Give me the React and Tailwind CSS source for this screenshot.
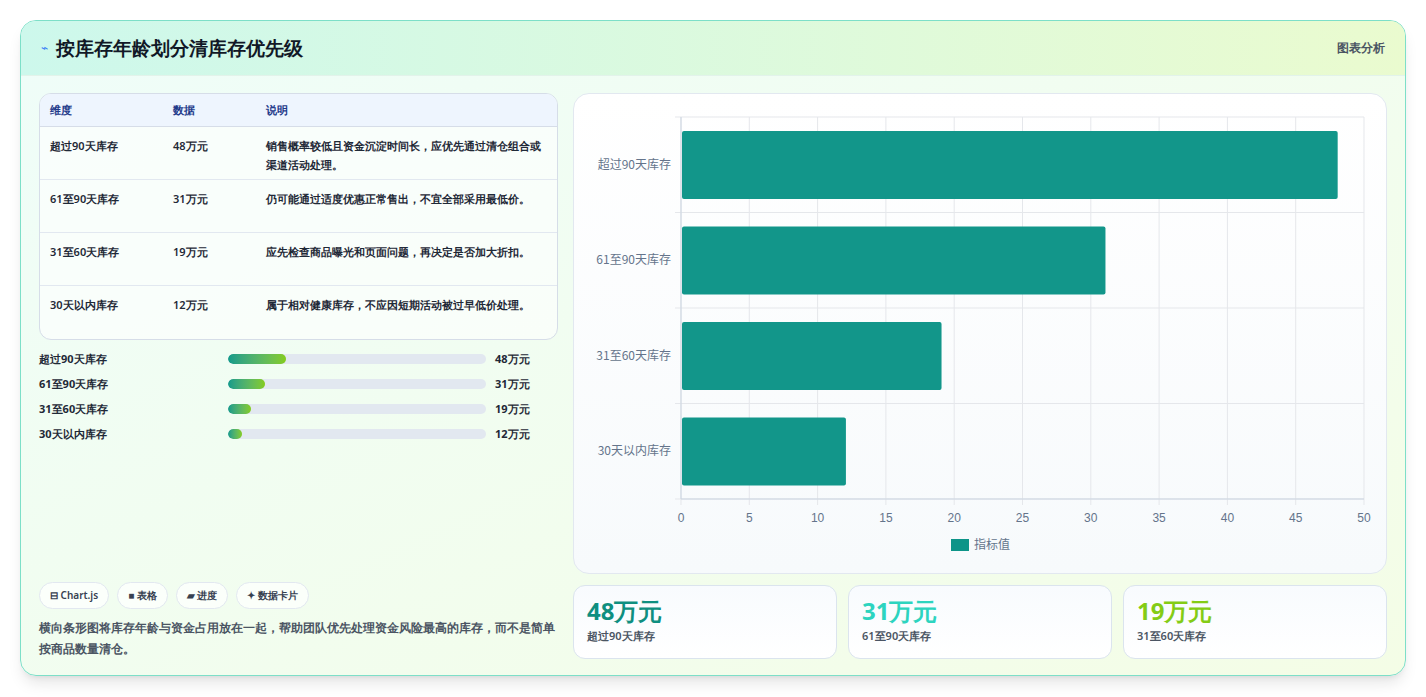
import React from 'react';

const rows = [
	{ name: '超过90天库存', value: 48, desc: '销售概率较低且资金沉淀时间长，应优先通过清仓组合或渠道活动处理。', bar: '22.5%' },
	{ name: '61至90天库存', value: 31, desc: '仍可能通过适度优惠正常售出，不宜全部采用最低价。', bar: '14.5%' },
	{ name: '31至60天库存', value: 19, desc: '应先检查商品曝光和页面问题，再决定是否加大折扣。', bar: '9%' },
	{ name: '30天以内库存', value: 12, desc: '属于相对健康库存，不应因短期活动被过早低价处理。', bar: '5.6%' },
];

function Chart() {
	const L = 107, T = 23, R = 790, B = 405;
	const w = R - L, band = (B - T) / 4;
	const ticks = [0, 5, 10, 15, 20, 25, 30, 35, 40, 45, 50];
	return (
		<svg width="813" height="480" viewBox="0 0 813 480" className="block">
			{ticks.map(t => {
				const x = L + (w * t) / 50;
				return (
					<g key={t}>
						<line x1={x} y1={T} x2={x} y2={B + 6} stroke="#e5e7eb" />
						<text x={x} y={428} textAnchor="middle" fontSize="12" fill="#64748b" fontFamily="Liberation Sans, sans-serif">{t}</text>
					</g>
				);
			})}
			{[0, 1, 2, 3, 4].map(i => (
				<line key={i} x1={L - 6} y1={T + band * i} x2={R} y2={T + band * i} stroke="#e5e7eb" />
			))}
			<line x1={L} y1={T} x2={L} y2={B} stroke="#cbd5e1" />
			<line x1={L} y1={B} x2={R} y2={B} stroke="#cbd5e1" />
			{rows.map((r, i) => (
				<g key={r.name}>
					<rect x={L + 1} y={T + band * i + 14} width={(w * r.value) / 50} height={68} rx="2" fill="#0d9488" fillOpacity="0.98" />
					<text x={L - 10} y={T + band * i + band / 2 + 4} textAnchor="end" fontSize="12" fill="#64748b" fontFamily="Noto Sans CJK SC, sans-serif">{r.name}</text>
				</g>
			))}
			<rect x={377} y={445} width={18} height={12} fill="#0d9488" />
			<text x={400} y={455} fontSize="12" fill="#64748b" fontFamily="Noto Sans CJK SC, sans-serif">指标值</text>
		</svg>
	);
}

export default function App() {
	return (
		<div className="w-[1426px] h-[697px] bg-white p-[20px] font-['Noto_Sans','Noto_Sans_CJK_SC',sans-serif]">
			<div className="w-[1386px] h-[656px] rounded-2xl border border-[#7ddfc8] bg-gradient-to-br from-[#effdf9] to-[#f4fde6] shadow-lg overflow-hidden flex flex-col">
				<div className="h-[55px] shrink-0 flex items-center justify-between px-5 bg-gradient-to-r from-[#cdf8ec] to-[#eafbcf] border-b border-[#e2f3ea]">
					<div className="flex items-center gap-2">
						<span className="text-[#3b82f6] text-xs">⌁</span>
						<span className="text-[19px] font-bold text-[#111827]">按库存年龄划分清库存优先级</span>
					</div>
					<span className="text-[12px] font-semibold text-[#4b5563]">图表分析</span>
				</div>
				<div className="flex-1 flex gap-[15px] px-[18px] pt-[17px] pb-[18px]">
					<div className="w-[520px] flex flex-col">
						<div className="rounded-xl border border-[#d6dde8] bg-white/60 overflow-hidden text-[11px] font-semibold">
							<div className="h-[33px] flex items-center bg-[#eef5fe] text-[#1e3a8a] border-b border-[#d6dde8]">
								<div className="w-[133px] pl-[10px]">维度</div>
								<div className="w-[93px]">数据</div>
								<div>说明</div>
							</div>
							{rows.map((r, i) => (
								<div key={r.name} className={`h-[53px] flex items-start pt-[9px] text-[#1f2937] leading-[19px] ${i < 3 ? 'border-b border-[#e2e8f0]' : ''}`}>
									<div className="w-[133px] pl-[10px]">{r.name}</div>
									<div className="w-[93px]">{r.value}万元</div>
									<div className="w-[282px]">{r.desc}</div>
								</div>
							))}
						</div>
						<div className="flex flex-col gap-[9px] mt-[11px] text-[11px] font-bold text-[#1f2937]">
							{rows.map(r => (
								<div key={r.name} className="flex items-center h-[16px]">
									<div className="w-[189px]">{r.name}</div>
									<div className="w-[258px] h-[10px] rounded-full bg-[#e2e8f0] overflow-hidden">
										<div className="h-full rounded-full bg-gradient-to-r from-[#0f9b8a] to-[#84cc16]" style={{ width: r.bar }}></div>
									</div>
									<div className="ml-[9px]">{r.value}万元</div>
								</div>
							))}
						</div>
						<div className="mt-auto">
							<div className="flex gap-2 text-[10px] font-semibold text-[#374151]">
								<span className="px-[10px] h-[27px] flex items-center rounded-full border border-[#e2e8f0] bg-white/70">⊟ Chart.js</span>
								<span className="px-[10px] h-[27px] flex items-center rounded-full border border-[#e2e8f0] bg-white/70">■ 表格</span>
								<span className="px-[10px] h-[27px] flex items-center rounded-full border border-[#e2e8f0] bg-white/70">▰ 进度</span>
								<span className="px-[10px] h-[27px] flex items-center rounded-full border border-[#e2e8f0] bg-white/70">✦ 数据卡片</span>
							</div>
							<p className="mt-[8px] text-[12px] leading-[21px] font-semibold text-[#4b5563]">横向条形图将库存年龄与资金占用放在一起，帮助团队优先处理资金风险最高的库存，而不是简单按商品数量清仓。</p>
						</div>
					</div>
					<div className="w-[814px] flex flex-col gap-[11px]">
						<div className="h-[481px] rounded-2xl border border-[#e2e8f0] bg-gradient-to-b from-white to-[#f7fafc] overflow-hidden">
							<Chart />
						</div>
						<div className="flex gap-[11px]">
							{[['48万元', 'text-[#0f8f80]', '超过90天库存'], ['31万元', 'text-[#2dd4bf]', '61至90天库存'], ['19万元', 'text-[#84cc16]', '31至60天库存']].map(c => (
								<div key={c[0]} className="flex-1 h-[74px] rounded-xl border border-[#dbe4ee] bg-gradient-to-b from-[#f8fbfe] to-white px-[13px] pt-[10px]">
									<div className={`text-[24px] font-bold leading-[30px] ${c[1]}`}>{c[0]}</div>
									<div className="text-[11px] font-semibold text-[#4b5563] mt-[2px]">{c[2]}</div>
								</div>
							))}
						</div>
					</div>
				</div>
			</div>
		</div>
	);
}
